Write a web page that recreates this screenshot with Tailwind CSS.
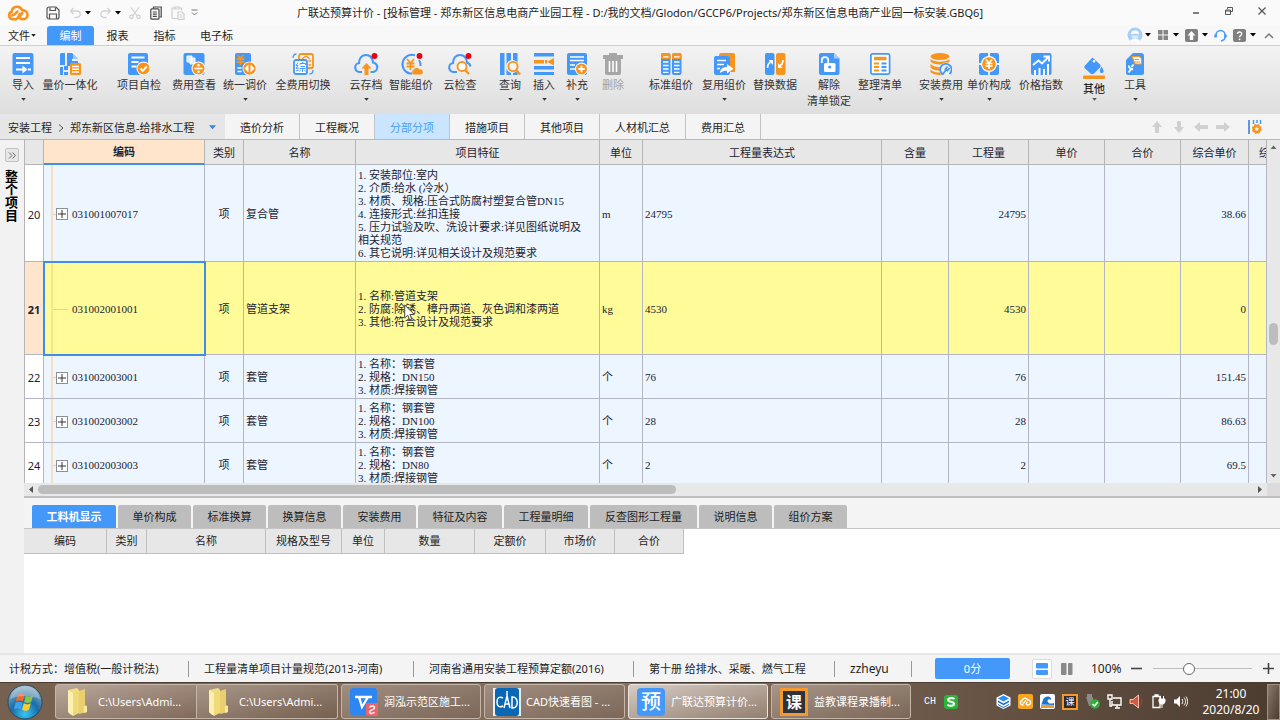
<!DOCTYPE html>
<html lang="zh-CN">
<head>
<meta charset="utf-8">
<meta name="viewport" content="width=device-width, initial-scale=1">
<title>广联达预算计价</title>
<script src="https://cdn.jsdelivr.net/npm/@tailwindcss/browser@4"></script>
</head>
<body class="flex h-screen flex-col overflow-hidden bg-[#f4f4f4] font-['Noto_Sans','Noto_Sans_CJK_SC',sans-serif] text-[11px] leading-4 text-[#1e1e1e]">

<!-- shared glyphs -->
<svg class="hidden" aria-hidden="true">
  <symbol id="caret" viewBox="0 0 6 4"><path d="M0 0h6L3 3.6z" fill="currentColor"/></symbol>
  <symbol id="folder" viewBox="0 0 24 30">
    <path d="M3 3l9-2 2 2v22l-8 3-3-3z" fill="#f3dd83"/><path d="M3 3l5 3v23l-5-4z" fill="#fbf0b4"/>
    <path d="M14 4l6-2v16l2 1v6l-8 2z" fill="#ead06c"/><path d="M8 6l6-3v23l-6 3z" fill="#f0d978"/><path d="M19 19h3v6l-3 1z" fill="#f7e9a0"/>
  </symbol>
</svg>

<!-- title bar -->
<header class="flex h-[25px] shrink-0 items-center bg-[#fafafa]">
  <div class="flex w-[208px] items-center pl-[7px]">
    <svg class="h-4 w-[22px]" viewBox="0 0 22 16" fill="none" stroke="#f7941d" stroke-width="2.6" stroke-linecap="round"><path d="M8.500 14.300H5.500A3.900 3.900 0 0 1 4.700 6.800C5 3.500 7.300 1.700 10 1.700c2.500 0 4.300 1.300 5 3.400 3.300 0 5.500 1.900 5.500 4.600 0 2.700-2 4.500-4.700 4.500-3.300 0-3.400-2.500-2-4.200l1.600-1.800"/><path d="M5 10.500c2.500-.3 3.500-2.500 5.500-3.800"/><path d="M8.500 14.300c3 0 3-3 4.500-5.500"/></svg>
    <button type="button" aria-label="保存" class="ml-[17px]"><svg class="size-[14px]" viewBox="0 0 14 14" fill="none" stroke="#555" stroke-width="1.200"><path d="M1 3a2 2 0 0 1 2-2h7l3 3v7a2 2 0 0 1-2 2H3a2 2 0 0 1-2-2z"/><path d="M4 1.500v3h5.500v-3M3.500 13V8h7v5"/></svg></button>
    <button type="button" aria-label="撤销" class="ml-[9px]"><svg class="size-3" viewBox="0 0 12 12" fill="none" stroke="#d2d2d2" stroke-width="1.300"><path d="M4.500 1L1.500 4l3 3M1.500 4H8a3 3 0 0 1 0 6.500H5.500"/></svg></button>
    <svg class="ml-[4px] h-1 w-[6px] text-black"><use href="#caret"/></svg>
    <button type="button" aria-label="恢复" class="ml-[9px]"><svg class="size-3" viewBox="0 0 12 12" fill="none" stroke="#d2d2d2" stroke-width="1.300"><path d="M7.500 1l3 3-3 3M10.500 4H4a3 3 0 0 0 0 6.500h2.500"/></svg></button>
    <svg class="ml-[3px] h-1 w-[6px] text-black"><use href="#caret"/></svg>
    <button type="button" aria-label="剪切" class="ml-[8px]"><svg class="size-3" viewBox="0 0 12 12" fill="none" stroke="#cfcfcf" stroke-width="1.200"><path d="M2 .5l6 8M10 .5l-6 8"/><circle cx="2.500" cy="9.800" r="1.700"/><circle cx="9.500" cy="9.800" r="1.700"/></svg></button>
    <button type="button" aria-label="复制" class="ml-[9px]"><svg class="h-[14px] w-3" viewBox="0 0 12 14" fill="none" stroke="#484848" stroke-width="1.200"><path d="M3.500 2.500V1h7.700v10H9.500"/><rect x=".8" y="2.800" width="8.200" height="10.400" rx="1"/><path d="M2.800 6h4M2.800 8.200h4M2.800 10.400h4"/></svg></button>
    <button type="button" aria-label="粘贴" class="ml-[9px]"><svg class="size-[14px]" viewBox="0 0 14 14" fill="none" stroke="#cfcfcf" stroke-width="1.200"><path d="M6 12.500H1V2h2.500M8 2h2.500v2.500M3.500 1h4.500v2H3.500z"/><path d="M7 6h4l2 2v5.300H7zM8.500 9h3M8.500 11h3"/></svg></button>
    <svg class="ml-[6px] size-[7px]" viewBox="0 0 7 7" fill="none" stroke="#777"><path d="M.5 1h6M1 3.500l2.500 2.500L6 3.500"/></svg>
  </div>
  <h1 class="flex-1 whitespace-nowrap text-center">广联达预算计价 - [投标管理 - 郑东新区信息电商产业园工程 - D:/我的文档/Glodon/GCCP6/Projects/郑东新区信息电商产业园一标安装.GBQ6]</h1>
  <div class="flex w-[208px] items-center justify-end gap-[23px] pr-[13px] pb-1">
    <button type="button" aria-label="最小化"><svg class="size-[10px]" viewBox="0 0 10 10"><path d="M2 7h6" stroke="#555" stroke-width="1.500"/></svg></button>
    <button type="button" aria-label="还原"><svg class="size-[10px]" viewBox="0 0 10 10" fill="none" stroke="#555"><path d="M3.500 3V1.500h5v4H7M1.500 4h5v4.500h-5zM1.500 5h5"/></svg></button>
    <button type="button" aria-label="关闭"><svg class="size-[10px]" viewBox="0 0 10 10"><path d="M1.500 1.500l7 7M8.500 1.500l-7 7" stroke="#555" stroke-width="1.200"/></svg></button>
  </div>
</header>

<!-- menu -->
<nav class="flex h-[21px] shrink-0 items-end border-b border-[#cfcfcf] bg-[#f8f8f8]">
  <button type="button" class="flex h-[19px] w-[47px] items-center pl-2">文件<svg class="ml-px h-[3px] w-[5px]"><use href="#caret"/></svg></button>
  <button type="button" class="h-[19px] w-[47px] rounded-t-[3px] bg-[#4398fa] text-white">编制</button>
  <button type="button" class="h-[19px] w-[47px]">报表</button>
  <button type="button" class="h-[19px] w-[47px]">指标</button>
  <button type="button" class="h-[19px] w-[57px]">电子标</button>
  <div class="ml-auto flex h-5 items-center pr-[6px] text-black">
    <button type="button" aria-label="账户" class="flex items-center"><svg class="size-4" viewBox="0 0 16 16"><circle cx="8" cy="8" r="7.500" fill="#a9cff6"/><path d="M4 7.500a4 4 0 0 1 8 0l-2-.8H6z" fill="#fff"/><path d="M4.500 8.500a3.500 3.500 0 0 0 7 0z" fill="#d8ebfd"/><path d="M3 14c1-3 9-3 10 0-3 2-7 2-10 0z" fill="#fff"/></svg><svg class="ml-[2px] h-1 w-[6px]"><use href="#caret"/></svg></button>
    <button type="button" aria-label="布局" class="ml-[6px] flex items-center"><svg class="size-[12px]" viewBox="0 0 12 12" fill="#858585"><path d="M1 1h4.500v4.500H1zM6.500 1H11v4.500H6.500zM1 6.500h4.500V11H1zM6.500 6.500H11V11H6.500z"/></svg><svg class="ml-[4px] h-1 w-[6px]"><use href="#caret"/></svg></button>
    <button type="button" aria-label="上传" class="ml-[6px] flex items-center"><svg class="size-[13px]" viewBox="0 0 13 13"><rect width="13" height="13" rx="2" fill="#808080"/><path d="M6.500 2l4 4.500h-2.300V11H4.800V6.500H2.500z" fill="#fff"/></svg><svg class="ml-[4px] h-1 w-[6px]"><use href="#caret"/></svg></button>
    <button type="button" aria-label="客服" class="ml-[6px]"><svg class="size-[13px]" viewBox="0 0 13 13" fill="none" stroke="#4398fa" stroke-width="1.500"><path d="M2 8V6a4.500 4.500 0 0 1 9 0v2c0 2-1.500 3.500-4 4"/><path d="M1.500 5.500v3M11.500 5.500v3" stroke-width="2.400"/></svg></button>
    <button type="button" aria-label="帮助" class="ml-[6px] flex items-center"><svg class="size-[13px]" viewBox="0 0 13 13"><rect width="13" height="13" rx="2" fill="#808080"/><path d="M4.500 5c0-2.800 4.300-2.600 4.200-.2C8.700 6.500 6.600 6.500 6.600 8.200" fill="none" stroke="#fff" stroke-width="1.400"/><circle cx="6.600" cy="10.300" r=".9" fill="#fff"/></svg><svg class="ml-[4px] h-1 w-[6px]"><use href="#caret"/></svg></button>
    <button type="button" aria-label="收起" class="ml-[8px]"><svg class="h-[7px] w-[10px]" viewBox="0 0 10 7" fill="none" stroke="#777" stroke-width="1.500"><path d="M1 6l4-4 4 4"/></svg></button>
  </div>
</nav>

<!-- ribbon -->
<div class="flex h-[68px] shrink-0 items-start bg-linear-to-b from-[#f3f3f3] to-[#dedede] pt-[7px] pl-[10px] whitespace-nowrap text-[#333]">
  <button type="button" class="flex w-[26px] flex-col items-center"><svg class="size-[22px]" viewBox="0 0 22 22"><rect x=".5" width="21" height="22" rx="2" fill="#4398fa"/><path d="M4 5h14M4 10h14M4 16.500h7M16 16.500h3" stroke="#fff" stroke-width="1.800"/><path d="M10.500 12.500l5 4-5 4z" fill="#fff"/></svg><span class="mt-[2px]">导入</span><svg class="mt-[5px] h-[3px] w-[5px]"><use href="#caret"/></svg></button>
  <button type="button" class="ml-[5px] flex w-[58px] flex-col items-center"><svg class="size-[22px]" viewBox="0 0 22 22"><path d="M2 0h4v12H1V1zM8 0h5v8h6v3h-7v2H8zM13 0l6 6h-6z" fill="#4398fa"/><path d="M14 1v5h5z" fill="#9dcbff"/><rect x="5" y="13" width="4" height="4" fill="#4398fa"/><path d="M1 14h3v8H1zM5 19h4v3H5z" fill="#4398fa"/><rect x="11" y="10" width="11" height="12" rx="1.500" fill="#f7941d"/><path d="M13 13.500h7M13 16.200h7M13 19h7" stroke="#fff" stroke-width="1.400"/></svg><span class="mt-[2px]">量价一体化</span><svg class="mt-[5px] h-[3px] w-[5px]"><use href="#caret"/></svg></button>
  <button type="button" class="ml-[16px] flex w-[48px] flex-col items-center"><svg class="size-[22px]" viewBox="0 0 22 22"><rect width="20" height="22" rx="2" fill="#4398fa"/><path d="M3.500 4.500h13M3.500 9h7M3.500 13.500h5" stroke="#fff" stroke-width="1.800"/><circle cx="15.500" cy="15.500" r="7" fill="#fff"/><circle cx="15.500" cy="15.500" r="6" fill="#f7941d"/><path d="M12.500 15.500l2.300 2.300 4-4.300" fill="none" stroke="#fff" stroke-width="1.900"/></svg><span class="mt-[2px]">项目自检</span></button>
  <button type="button" class="ml-[7px] flex w-[48px] flex-col items-center"><svg class="size-[22px]" viewBox="0 0 22 22"><rect x=".5" width="21" height="22" rx="2" fill="#4398fa"/><path d="M4 3h5v6H4zM7 5h5v6H7z" fill="#d9ebff" stroke="#fff"/><circle cx="15.500" cy="15.500" r="7" fill="#fff"/><circle cx="15.500" cy="15.500" r="6" fill="#f7941d"/><path d="M11.500 15.500h8" stroke="#fff" stroke-width="1.700"/><circle cx="15.500" cy="12.300" r="1.200" fill="#fff"/><circle cx="15.500" cy="18.700" r="1.200" fill="#fff"/></svg><span class="mt-[2px]">费用查看</span></button>
  <button type="button" class="ml-[3px] flex w-[48px] flex-col items-center"><svg class="size-[22px]" viewBox="0 0 22 22"><rect x="1" width="16" height="22" rx="2" fill="#4398fa"/><path d="M3.500 2l3 3.500 3-3.500M2.500 6h8M2.500 9h8M6.500 5v7" fill="none" stroke="#f7941d" stroke-width="1.900"/><path d="M3.500 15h4M3.500 18.500h4" stroke="#fff" stroke-width="1.500"/><circle cx="15.500" cy="15.500" r="7" fill="#fff"/><circle cx="15.500" cy="15.500" r="6.200" fill="#f7941d"/><path d="M14.500 11.500v8l-4-4zM16.500 11.500v8l4-4z" fill="#fff"/></svg><span class="mt-[2px]">统一调价</span><svg class="mt-[5px] h-[3px] w-[5px]"><use href="#caret"/></svg></button>
  <button type="button" class="ml-[5px] flex w-[58px] flex-col items-center"><svg class="size-[22px]" viewBox="0 0 22 22" fill="none"><rect x="7" y="1" width="14" height="14" rx="2" stroke="#f7941d" stroke-width="1.800"/><path d="M10 6l4-3 4 3M16.500 8h2.500M16.500 12h2.500" stroke="#f7941d" stroke-width="1.400"/><rect x="2" y="7" width="13" height="14" rx="2" fill="#fff" stroke="#4398fa" stroke-width="1.800"/><path d="M6 9.500l-2 3h2l-2 3 3-.5M4 18l3-1M10.500 9v1.500M8 12v-1.500h5.500V12M8.500 13.500h4.500M7.500 15.500h6M10.500 15.500V19M8.500 17l-1 1.500M12.500 17l1 1.500" stroke="#4398fa"/><path d="M1 5c0-2.500 1-4 3.500-4M21 17c0 2.500-1 4-3.500 4" stroke="#4398fa" stroke-width="1.300"/></svg><span class="mt-[2px]">全费用切换</span></button>
  <button type="button" class="ml-[16px] flex w-[36px] flex-col items-center"><svg class="size-[22px] overflow-visible" viewBox="0 0 22 22"><path d="M7 19H5.500A4.500 4.500 0 0 1 4 10C4 5 7 2 11 2s6.500 3 7 7.500A4.700 4.700 0 0 1 17 19h-1.500" fill="none" stroke="#4398fa" stroke-width="2.100"/><path d="M11.500 10l5 5.500h-3V22h-4v-6.500h-3z" fill="#f7941d"/><circle cx="19.500" cy="3" r="2.900" fill="#e60012"/></svg><span class="mt-[2px]">云存档</span><svg class="mt-[5px] h-[3px] w-[5px]"><use href="#caret"/></svg></button>
  <button type="button" class="ml-[3px] flex w-[48px] flex-col items-center"><svg class="size-[22px] overflow-visible" viewBox="0 0 22 22"><path d="M15 2.200A9.500 9.500 0 1 0 10 20.500h2M19 7a9 9 0 0 1 1.500 6" fill="none" stroke="#4398fa" stroke-width="2"/><path d="M7 6l3.500 4L14 6M6.500 10.500h8M6.500 13.500h8M10.500 10v7" fill="none" stroke="#f7941d" stroke-width="1.800"/><path d="M13 21.500a3 3 0 0 1 1-5 3 3 0 0 1 5.500 0 2.600 2.600 0 0 1 1.500 5z" fill="#f7941d"/><circle cx="19.500" cy="3" r="2.900" fill="#e60012"/></svg><span class="mt-[2px]">智能组价</span></button>
  <button type="button" class="ml-[7px] flex w-[36px] flex-col items-center"><svg class="size-[22px] overflow-visible" viewBox="0 0 22 22"><path d="M8 19H5.500A4.500 4.500 0 0 1 4 10C4 5 7 2 11 2s6.500 3 7 7.500a5 5 0 0 1 3.500 4" fill="none" stroke="#4398fa" stroke-width="2.100"/><circle cx="13" cy="13.500" r="4.500" fill="#fff" stroke="#f7941d" stroke-width="1.900"/><path d="M16 17l4 4" stroke="#f7941d" stroke-width="2.400"/><circle cx="19.500" cy="3" r="2.900" fill="#e60012"/></svg><span class="mt-[2px]">云检查</span></button>
  <button type="button" class="ml-[19px] flex w-[26px] flex-col items-center"><svg class="size-[22px]" viewBox="0 0 22 22"><path d="M1 0h4.500v22H1zM7.500 0H12v22H7.500zM14 0h4.500v22H14z" fill="#4398fa"/><circle cx="13.500" cy="13.500" r="6.500" fill="#f1f1f1"/><circle cx="14" cy="13.500" r="4.600" fill="#f4f4f4" stroke="#f7941d" stroke-width="1.900"/><path d="M17 17l4 4.500" stroke="#f7941d" stroke-width="2.400"/></svg><span class="mt-[2px]">查询</span><svg class="mt-[5px] h-[3px] w-[5px]"><use href="#caret"/></svg></button>
  <button type="button" class="ml-[8px] flex w-[26px] flex-col items-center"><svg class="size-[22px]" viewBox="0 0 22 22"><path d="M1 0h20v3.500H1zM1 13h20v3.500H1zM1 19h20v3H1z" fill="#4398fa"/><path d="M1 7h10v3.500H1zM21 5v7.500l-7-3.700zM12 7h2v3.500h-2z" fill="#f7941d"/></svg><span class="mt-[2px]">插入</span><svg class="mt-[5px] h-[3px] w-[5px]"><use href="#caret"/></svg></button>
  <button type="button" class="ml-[7px] flex w-[26px] flex-col items-center"><svg class="size-[22px]" viewBox="0 0 22 22"><rect x="1" width="20" height="22" rx="2" fill="#4398fa"/><path d="M4 4h14M4 7.500h14M4 12h5M4 16h5" stroke="#fff" stroke-width="1.400"/><circle cx="15.500" cy="16" r="6.500" fill="#fff"/><circle cx="15.500" cy="16" r="5.500" fill="#f7941d"/><path d="M12.300 16h6.400M15.500 12.800v6.400" stroke="#fff" stroke-width="1.800"/></svg><span class="mt-[2px]">补充</span><svg class="mt-[5px] h-[3px] w-[5px]"><use href="#caret"/></svg></button>
  <button type="button" disabled class="ml-[10px] flex w-[26px] flex-col items-center text-[#a2a2a2]"><svg class="size-[22px]" viewBox="0 0 22 22" fill="#a6a6a6"><path d="M7 0h8v2h6v4H1V2h6z"/><path d="M3 6h16v14a2 2 0 0 1-2 2H5a2 2 0 0 1-2-2z"/><path d="M7.500 8v11M11 8v11M14.500 8v11" stroke="#fff" stroke-width="1.600"/></svg><span class="mt-[2px]">删除</span></button>
  <button type="button" class="ml-[21px] flex w-[48px] flex-col items-center"><svg class="size-[22px]" viewBox="0 0 22 22"><rect x="1" width="9.500" height="22" rx="2" fill="#4398fa"/><rect x="12" width="9.500" height="22" rx="2" fill="#4398fa"/><path d="M1 6V2a2 2 0 0 1 2-2h5.500a2 2 0 0 1 2 2v4zM12 6V2a2 2 0 0 1 2-2h5.500a2 2 0 0 1 2 2v4z" fill="#f7941d"/><path d="M3 3.800h5.500M14 3.800h5.500M3 9h5.500M14 9h5.500M3 12.500h5.500M14 12.500h5.500M3 16h5.500M14 16h5.500M3 19.300h5.500M14 19.300h5.500" stroke="#fff" stroke-width="1.300"/></svg><span class="mt-[2px]">标准组价</span></button>
  <button type="button" class="ml-[5px] flex w-[48px] flex-col items-center"><svg class="size-[22px]" viewBox="0 0 22 22"><path d="M6 2a2 2 0 0 1 2-2h12a2 2 0 0 1 2 2v17h-6V3H6z" fill="#f7941d"/><rect x="1" y="3" width="16" height="19" rx="2" fill="#4398fa"/><path d="M4 7.500h9M4 11.500h7M4 15.500h3" stroke="#fff" stroke-width="1.700"/><path d="M7 20c0-4 3-6 7-6v-3l6.500 4.800L14 20.500v-2.800c-3 0-5 .5-7 2.300z" fill="#fff"/></svg><span class="mt-[2px]">复用组价</span><svg class="mt-[5px] h-[3px] w-[5px]"><use href="#caret"/></svg></button>
  <button type="button" class="ml-[3px] flex w-[48px] flex-col items-center"><svg class="size-[22px]" viewBox="0 0 22 22"><rect x="1" width="9.500" height="22" rx="2" fill="#4398fa"/><rect x="12" width="9.500" height="22" rx="2" fill="#f7941d"/><path d="M3.500 15c0-3 .5-4.500 3-6M19 7c0 3-.5 4.500-3 6" fill="none" stroke="#fff" stroke-width="1.600"/><path d="M4.500 7H9v5zM18.500 15H14v-5z" fill="#fff"/></svg><span class="mt-[2px]">替换数据</span></button>
  <button type="button" class="ml-[6px] flex w-[48px] flex-col items-center"><svg class="size-[22px]" viewBox="0 0 22 22"><path d="M3 0h13l5.500 5.500V20a2 2 0 0 1-2 2H3a2 2 0 0 1-2-2V2a2 2 0 0 1 2-2z" fill="#4398fa"/><path d="M16 0v5.500h5.500z" fill="#a5d0ff"/><rect x="6" y="10" width="11.500" height="9" rx="1.500" fill="#fff"/><path d="M3.800 10V7.300a3.200 3.200 0 0 1 6.400 0V10" fill="none" stroke="#fff" stroke-width="1.800"/><circle cx="11.700" cy="14" r="1.600" fill="#4398fa"/></svg><span class="mt-[2px] text-center">解除<br>清单锁定</span></button>
  <button type="button" class="ml-[3px] flex w-[48px] flex-col items-center"><svg class="size-[22px]" viewBox="0 0 22 22"><rect x="1.900" y=".9" width="18.700" height="20.200" rx="1.500" fill="#fff" stroke="#4398fa" stroke-width="1.700"/><path d="M5 5.500h12.500" stroke="#f7941d" stroke-width="3.500"/><path d="M5 10.500h5M5 14h5M5 17.500h5" stroke="#f7941d" stroke-width="1.900"/><path d="M12.500 10.500h5M12.500 14h5M12.500 17.500h5" stroke="#4398fa" stroke-width="1.900"/></svg><span class="mt-[2px]">整理清单</span><svg class="mt-[5px] h-[3px] w-[5px]"><use href="#caret"/></svg></button>
  <button type="button" class="ml-[13px] flex w-[48px] flex-col items-center"><svg class="size-[22px]" viewBox="0 0 22 22"><ellipse cx="10" cy="3.500" rx="9.500" ry="3.500" fill="#f7941d"/><path d="M.5 6c3 3.500 16 3.500 19 0v2.500c-3 4-16 4-19 0zM.5 11c3 3 8 3.500 11 3l-1 3.500c-4 0-8-.5-10-3zM.5 16.500c2 2.500 6 3 9.500 3l1 2.500c-5 0-9-1-10.500-3z" fill="#f7941d"/><circle cx="16" cy="16" r="6.500" fill="#f0f0f0"/><path d="M13 21.500a5.700 5.700 0 1 1 6.500-.5" fill="none" stroke="#4398fa" stroke-width="1.800"/><path d="M17.500 13.500l-2 2.500 2 1.500 2-2.500M16 17l-4 5" stroke="#4398fa" stroke-width="1.900" fill="none"/></svg><span class="mt-[2px]">安装费用</span><svg class="mt-[5px] h-[3px] w-[5px]"><use href="#caret"/></svg></button>
  <button type="button" class="flex w-[48px] flex-col items-center"><svg class="size-[22px]" viewBox="0 0 22 22"><path d="M1 2a2 2 0 0 1 2-2h7v10H1zM12 0h7a2 2 0 0 1 2 2v8h-9zM1 12h9v10H3a2 2 0 0 1-2-2zM12 12h9v8a2 2 0 0 1-2 2h-7z" fill="#4398fa"/><circle cx="11" cy="11" r="8" fill="#fff"/><circle cx="11" cy="11" r="6.800" fill="#f7941d"/><path d="M8 6.500l3 3.500 3-3.500M7.500 10.500h7M7.500 13h7M11 10v6" fill="none" stroke="#fff" stroke-width="1.500"/></svg><span class="mt-[2px]">单价构成</span><svg class="mt-[5px] h-[3px] w-[5px]"><use href="#caret"/></svg></button>
  <button type="button" class="ml-[4px] flex w-[48px] flex-col items-center"><svg class="size-[22px]" viewBox="0 0 22 22"><rect x="1" width="20.500" height="22" rx="2" fill="#4398fa"/><path d="M5 22v-5M9.500 22v-7M14 22v-6M18 22V11" stroke="#fff" stroke-width="2"/><path d="M3 12l5.500-4.500 3.500 3L18.500 4M13.500 3.500h5.500v5" fill="none" stroke="#fff" stroke-width="1.800"/></svg><span class="mt-[2px]">价格指数</span></button>
  <button type="button" class="ml-[16px] flex w-[26px] flex-col items-center pt-1 text-black"><svg class="size-[22px]" viewBox="0 0 22 22"><rect y="18.500" width="22" height="3.500" rx="1" fill="#f7941d"/><path d="M9.500.5l8 7.500v2l-6.500 6.500c-1 1-2.500 1-3.500 0L2 11.500c-1-1-1-2 0-3z" fill="#4398fa"/><circle cx="11" cy="4.200" r="1.300" fill="#fff"/><path d="M18.500 9.500c3 4.500 2.500 6.500.3 6.500-2.500 0-2.500-2.500-.3-6.500z" fill="#4398fa"/></svg><span class="mt-[2px]">其他</span><svg class="mt-px h-[3px] w-[5px] text-[#555]"><use href="#caret"/></svg></button>
  <button type="button" class="ml-[15px] flex w-[26px] flex-col items-center"><svg class="size-[22px]" viewBox="0 0 22 22"><path d="M9 0h8a3 3 0 0 1 3 3v17a2 2 0 0 1-2 2H4a2 2 0 0 1-2-2V7z" fill="#4398fa"/><path d="M8 3.500h7.500l2 2V11H11z" fill="#fff" stroke="#f7941d" stroke-width="1.200"/><path d="M10.500 6.500h4.500M11 9h5" stroke="#f7941d"/><path d="M5 12.500a3 3 0 0 0 4 3.500M9.500 11.500l-2 2.500M8 15l-3.500 4.500" stroke="#fff" stroke-width="1.900" fill="none"/></svg><span class="mt-[2px]">工具</span><svg class="mt-[5px] h-[3px] w-[5px]"><use href="#caret"/></svg></button>
</div>

<!-- project tabs -->
<div class="flex h-[26px] shrink-0 items-stretch border-b border-[#b9b9b9] bg-[#f4f4f4] whitespace-nowrap [&>button]:pt-[2px]">
  <div class="flex w-[225px] items-center bg-[#e6e6e6] pt-[2px] pl-2">
    <a href="#">安装工程</a>
    <svg class="mx-[6px] h-2 w-[6px]" viewBox="0 0 6 8" fill="none" stroke="#555"><path d="M1 .5L5 4 1 7.500"/></svg>
    <button type="button" class="flex flex-1 items-center justify-between pr-[9px]">郑东新区信息-给排水工程<svg class="h-[5px] w-[7px] text-[#3a86d8]"><use href="#caret"/></svg></button>
  </div>
  <button type="button" class="w-[75px] border-r border-[#c2c2c2]">造价分析</button>
  <button type="button" class="w-[75px] border-r border-[#c2c2c2]">工程概况</button>
  <button type="button" class="w-[75px] border-r border-[#c2c2c2] bg-[#c9e5ff] text-[#4a9ef5]">分部分项</button>
  <button type="button" class="w-[75px] border-r border-[#c2c2c2]">措施项目</button>
  <button type="button" class="w-[75px] border-r border-[#c2c2c2]">其他项目</button>
  <button type="button" class="w-[86px] border-r border-[#c2c2c2]">人材机汇总</button>
  <button type="button" class="w-[75px] border-r border-[#c2c2c2]">费用汇总</button>
  <div class="ml-auto flex items-center gap-2 pr-[18px] text-[#d0d0d0]">
    <button type="button" aria-label="上移"><svg class="size-[14px]" viewBox="0 0 14 14" fill="currentColor"><path d="M7 1l5 6H9v6H5V7H2z"/></svg></button>
    <button type="button" aria-label="下移"><svg class="size-[14px]" viewBox="0 0 14 14" fill="currentColor"><path d="M7 13l5-6H9V1H5v6H2z"/></svg></button>
    <button type="button" aria-label="左移"><svg class="size-[14px]" viewBox="0 0 14 14" fill="currentColor"><path d="M0 7l6-5v3h8v4H6v3z"/></svg></button>
    <button type="button" aria-label="右移"><svg class="size-[14px]" viewBox="0 0 14 14" fill="currentColor"><path d="M14 7L8 2v3H0v4h8v3z"/></svg></button>
    <button type="button" aria-label="列设置" class="ml-[10px]"><svg class="size-[14px]" viewBox="0 0 14 14"><path d="M1 0v14" stroke="#3d7fd0" stroke-width="1.600"/><path d="M5.500 0v4M9 0v3M12.500 0v4" stroke="#4398fa" stroke-width="1.500"/><circle cx="8.800" cy="9" r="3" fill="none" stroke="#f7941d" stroke-width="2.400"/><circle cx="8.800" cy="9" r="4.300" fill="none" stroke="#f7941d" stroke-width="1.300" stroke-dasharray="2 1.400"/></svg></button>
  </div>
</div>

<main class="flex min-h-0 flex-1">
  <!-- collapsed project tree -->
  <aside class="flex w-6 shrink-0 flex-col items-start bg-[#f2f2f2] pt-2 pl-1">
    <button type="button" aria-label="展开" class="ml-px flex size-[14px] items-center justify-center rounded-[2px] border border-[#c4c4c4] bg-[#e6e6e6]"><svg class="h-[7px] w-2" viewBox="0 0 8 7" fill="none" stroke="#666"><path d="M1 .5l3 3-3 3M4.500.5l3 3-3 3"/></svg></button>
    <div class="mt-2 text-[13px] leading-[13px] font-bold text-black [writing-mode:vertical-rl]">整个项目</div>
  </aside>

  <div class="flex min-w-0 flex-1 flex-col">
    <!-- bill grid -->
    <div class="flex min-h-0 flex-1">
      <div class="min-w-0 flex-1 overflow-hidden border-l border-[#b5b5b5] bg-white">
        <table class="w-full table-fixed border-separate border-spacing-0 whitespace-nowrap font-['Liberation_Serif','Noto_Sans_CJK_SC',serif] leading-[13px] text-[#1b2330] [&_td]:border-r [&_td]:border-b [&_td]:border-[#b3b6c4] [&_td]:px-[2px] [&_td]:pt-[2px] [&_td]:pb-0 [&_th]:overflow-hidden [&_th]:border-r [&_th]:border-b [&_th]:border-[#b5b5b5] [&_th]:p-0">
          <colgroup><col class="w-[19px]"><col class="w-[161px]"><col class="w-[39px]"><col class="w-[112px]"><col class="w-[244px]"><col class="w-[43px]"><col class="w-[239px]"><col class="w-[67px]"><col class="w-[80px]"><col class="w-[76px]"><col class="w-[76px]"><col class="w-[68px]"><col></colgroup>
          <thead class="bg-[#e7e7e7] font-['Noto_Sans','Noto_Sans_CJK_SC',sans-serif]">
            <tr class="h-[25px] [&>th]:font-normal">
              <th></th>
              <th class="border-b-2! border-b-[#3f8fe6]! bg-[#ffe5cb] font-bold!">编码</th>
              <th>类别</th><th>名称</th><th>项目特征</th><th>单位</th><th>工程量表达式</th><th>含量</th><th>工程量</th><th>单价</th><th>合价</th><th>综合单价</th>
              <th class="pl-[10px]! text-left">综</th>
            </tr>
          </thead>
          <tbody class="bg-[#edf5ff]">
            <tr class="h-[97px]">
              <td class="bg-white text-center font-['Noto_Sans']">20</td>
              <td class="bg-[linear-gradient(#f8dfc0,#f8dfc0)] bg-[length:2px_100%] bg-[position:7px_0] bg-no-repeat"><div class="flex items-center pl-[7px]"><span class="h-px w-[3px] bg-[#f0cfa5]"></span><button type="button" aria-label="展开" class="flex size-3 items-center justify-center border border-[#8c8f98] bg-white"><svg class="size-2" viewBox="0 0 8 8"><path d="M0 4h8M4 0v8" stroke="#333"/></svg></button><span class="ml-1">031001007017</span></div></td>
              <td class="text-center">项</td><td>复合管</td>
              <td>1. 安装部位:室内<br>2. 介质:给水 (冷水）<br>3. 材质、规格:压合式防腐衬塑复合管DN15<br>4. 连接形式:丝扣连接<br>5. 压力试验及吹、洗设计要求:详见图纸说明及<br>相关规范<br>6. 其它说明:详见相关设计及规范要求</td>
              <td>m</td><td>24795</td><td></td><td class="text-right">24795</td><td></td><td></td><td class="text-right">38.66</td><td></td>
            </tr>
            <tr class="h-[93px] bg-[#fffb98]">
              <td class="bg-[#ffe5cb] text-center font-['Noto_Sans'] font-bold">21</td>
              <td class="bg-[linear-gradient(#fbe38c,#fbe38c)] bg-[length:2px_100%] bg-[position:7px_0] bg-no-repeat outline-2 -outline-offset-1 outline-[#3f8fe6]"><div class="flex items-center pl-[7px]"><span class="h-px w-[15px] bg-[#e8d58a]"></span><span class="ml-1">031002001001</span></div></td>
              <td class="text-center">项</td><td>管道支架</td>
              <td class="relative">1. 名称:管道支架<br>2. 防腐:除锈、樟丹两道、灰色调和漆两道<br>3. 其他:符合设计及规范要求
                <svg class="absolute top-[42px] left-[48px] h-[17px] w-3" viewBox="0 0 12 17"><path d="M.7 1v13l3-2.800 2 4.800 2.200-1-2-4.500h4.400z" fill="#fff" stroke="#444"/></svg></td>
              <td>kg</td><td>4530</td><td></td><td class="text-right">4530</td><td></td><td></td><td class="text-right">0</td><td></td>
            </tr>
            <tr class="h-[44px]">
              <td class="bg-white text-center font-['Noto_Sans']">22</td>
              <td class="bg-[linear-gradient(#f8dfc0,#f8dfc0)] bg-[length:2px_100%] bg-[position:7px_0] bg-no-repeat"><div class="flex items-center pl-[7px]"><span class="h-px w-[3px] bg-[#f0cfa5]"></span><button type="button" aria-label="展开" class="flex size-3 items-center justify-center border border-[#8c8f98] bg-white"><svg class="size-2" viewBox="0 0 8 8"><path d="M0 4h8M4 0v8" stroke="#333"/></svg></button><span class="ml-1">031002003001</span></div></td>
              <td class="text-center">项</td><td>套管</td><td>1. 名称：钢套管<br>2. 规格：DN150<br>3. 材质:焊接钢管</td>
              <td>个</td><td>76</td><td></td><td class="text-right">76</td><td></td><td></td><td class="text-right">151.45</td><td></td>
            </tr>
            <tr class="h-[44px]">
              <td class="bg-white text-center font-['Noto_Sans']">23</td>
              <td class="bg-[linear-gradient(#f8dfc0,#f8dfc0)] bg-[length:2px_100%] bg-[position:7px_0] bg-no-repeat"><div class="flex items-center pl-[7px]"><span class="h-px w-[3px] bg-[#f0cfa5]"></span><button type="button" aria-label="展开" class="flex size-3 items-center justify-center border border-[#8c8f98] bg-white"><svg class="size-2" viewBox="0 0 8 8"><path d="M0 4h8M4 0v8" stroke="#333"/></svg></button><span class="ml-1">031002003002</span></div></td>
              <td class="text-center">项</td><td>套管</td><td>1. 名称：钢套管<br>2. 规格：DN100<br>3. 材质:焊接钢管</td>
              <td>个</td><td>28</td><td></td><td class="text-right">28</td><td></td><td></td><td class="text-right">86.63</td><td></td>
            </tr>
            <tr class="h-[44px]">
              <td class="bg-white text-center font-['Noto_Sans']">24</td>
              <td class="bg-[linear-gradient(#f8dfc0,#f8dfc0)] bg-[length:2px_100%] bg-[position:7px_0] bg-no-repeat"><div class="flex items-center pl-[7px]"><span class="h-px w-[3px] bg-[#f0cfa5]"></span><button type="button" aria-label="展开" class="flex size-3 items-center justify-center border border-[#8c8f98] bg-white"><svg class="size-2" viewBox="0 0 8 8"><path d="M0 4h8M4 0v8" stroke="#333"/></svg></button><span class="ml-1">031002003003</span></div></td>
              <td class="text-center">项</td><td>套管</td><td>1. 名称：钢套管<br>2. 规格：DN80<br>3. 材质:焊接钢管</td>
              <td>个</td><td>2</td><td></td><td class="text-right">2</td><td></td><td></td><td class="text-right">69.5</td><td></td>
            </tr>
          </tbody>
        </table>
      </div>
      <!-- vertical scrollbar -->
      <div class="flex w-[13px] shrink-0 flex-col items-center bg-[#e8e8e8] py-[5px] text-[#666]">
        <svg class="h-1 w-[7px] rotate-180"><use href="#caret"/></svg>
        <div class="flex-[174_1_0%]"></div>
        <div class="h-[22px] w-[9px] rounded-full bg-[#bdbdbd]"></div>
        <div class="flex-[129_1_0%]"></div>
        <svg class="h-1 w-[7px]"><use href="#caret"/></svg>
      </div>
    </div>
    <!-- horizontal scrollbar -->
    <div class="flex h-[13px] shrink-0 items-center bg-[#e8e8e8] text-[#555]">
      <svg class="mx-[5px] h-[7px] w-1" viewBox="0 0 4 7"><path d="M4 0v7L0 3.500z" fill="currentColor"/></svg>
      <div class="flex-1"><div class="h-[9px] w-[52.5%] rounded-full bg-[#bdbdbd]"></div></div>
      <svg class="mx-[5px] h-[7px] w-1" viewBox="0 0 4 7"><path d="M0 0v7l4-3.500z" fill="currentColor"/></svg>
      <div class="h-full w-[13px] bg-[#dcdcdc]"></div>
    </div>

    <!-- detail pane -->
    <section class="flex h-[157px] shrink-0 flex-col border-t-2 border-[#bdbdbd] bg-[#f4f4f4]">
      <div class="flex h-[31px] shrink-0 items-end gap-[2px] border-b border-[#c4c4c4] pl-2 whitespace-nowrap">
        <button type="button" class="h-[23px] w-[84px] rounded-t-[2px] bg-[#4398fa] font-bold text-white">工料机显示</button>
        <button type="button" class="h-[23px] w-[73px] rounded-t-[2px] bg-[#bdbdbd]">单价构成</button>
        <button type="button" class="h-[23px] w-[73px] rounded-t-[2px] bg-[#bdbdbd]">标准换算</button>
        <button type="button" class="h-[23px] w-[73px] rounded-t-[2px] bg-[#bdbdbd]">换算信息</button>
        <button type="button" class="h-[23px] w-[73px] rounded-t-[2px] bg-[#bdbdbd]">安装费用</button>
        <button type="button" class="h-[23px] w-[84px] rounded-t-[2px] bg-[#bdbdbd]">特征及内容</button>
        <button type="button" class="h-[23px] w-[84px] rounded-t-[2px] bg-[#bdbdbd]">工程量明细</button>
        <button type="button" class="h-[23px] w-[107px] rounded-t-[2px] bg-[#bdbdbd]">反查图形工程量</button>
        <button type="button" class="h-[23px] w-[73px] rounded-t-[2px] bg-[#bdbdbd]">说明信息</button>
        <button type="button" class="h-[23px] w-[73px] rounded-t-[2px] bg-[#bdbdbd]">组价方案</button>
      </div>
      <div class="flex-1 bg-white">
        <table class="w-[660px] table-fixed border-separate border-spacing-0 bg-[#e7e7e7] whitespace-nowrap">
          <thead><tr class="h-[25px] [&>th]:border-r [&>th]:border-b [&>th]:border-[#bfbfbf] [&>th]:p-0 [&>th]:font-normal">
            <th class="w-[83px]">编码</th><th class="w-[40px]">类别</th><th class="w-[119px]">名称</th><th class="w-[76px]">规格及型号</th><th class="w-[43px]">单位</th><th class="w-[90px]">数量</th><th class="w-[71px]">定额价</th><th class="w-[69px]">市场价</th><th class="w-[69px]">合价</th>
          </tr></thead>
        </table>
      </div>
    </section>
  </div>
</main>

<!-- status bar -->
<footer class="flex h-[29px] shrink-0 items-center border-t-2 border-[#e6e6e6] bg-[#f4f4f4] pl-[9px] whitespace-nowrap">
  <span class="w-[179px]">计税方式：增值税(一般计税法)</span>
  <span class="h-4 w-px bg-[#999]"></span>
  <span class="w-[224px] pl-[15px]">工程量清单项目计量规范(2013-河南)</span>
  <span class="h-4 w-px bg-[#999]"></span>
  <span class="w-[219px] pl-[15px]">河南省通用安装工程预算定额(2016)</span>
  <span class="h-4 w-px bg-[#999]"></span>
  <span class="w-[200px] pl-[15px]">第十册 给排水、采暖、燃气工程</span>
  <span class="h-4 w-px bg-[#999]"></span>
  <span class="w-[76px] pl-[15px] text-[12px]">zzheyu</span>
  <span class="h-4 w-px bg-[#999]"></span>
  <div class="ml-auto flex items-center pr-[6px]">
    <button type="button" class="h-[21px] w-[75px] rounded-[2px] bg-[#4398fa] text-white">0分</button>
    <button type="button" aria-label="上下布局" class="ml-[22px] flex size-5 items-center justify-center rounded-[2px] border border-[#dcdcdc] bg-white"><svg class="size-3" viewBox="0 0 12 12" fill="#4398fa"><rect width="12" height="5.500" rx="1"/><rect y="7" width="12" height="5" rx="1"/></svg></button>
    <button type="button" aria-label="左右布局" class="ml-[9px]"><svg class="size-3" viewBox="0 0 12 12" fill="#8a8a8a"><rect width="5.500" height="12" rx="1"/><rect x="7" width="4.500" height="12" rx="1"/></svg></button>
    <span class="ml-[18px] w-[40px] text-[12px]">100%</span>
    <button type="button" aria-label="缩小"><svg class="size-[11px]" viewBox="0 0 11 11"><path d="M0 5.500h11" stroke="#444" stroke-width="1.600"/></svg></button>
    <input type="range" min="0" max="100" value="34" aria-label="缩放" class="mx-[11px] h-3 w-[99px] appearance-none bg-[linear-gradient(#bdbdbd,#bdbdbd)] bg-[length:100%_1px] bg-center bg-no-repeat [&::-webkit-slider-thumb]:size-3 [&::-webkit-slider-thumb]:appearance-none [&::-webkit-slider-thumb]:rounded-full [&::-webkit-slider-thumb]:border [&::-webkit-slider-thumb]:border-[#666] [&::-webkit-slider-thumb]:bg-white">
    <button type="button" aria-label="放大"><svg class="size-[11px]" viewBox="0 0 11 11"><path d="M0 5.500h11M5.500 0v11" stroke="#444" stroke-width="1.600"/></svg></button>
  </div>
</footer>

<!-- desktop taskbar -->
<div class="flex h-[38px] shrink-0 items-center border-t border-[#4a3d33] bg-linear-to-r from-[#76604f] via-[#88705e] to-[#4b3c30] whitespace-nowrap text-white">
  <button type="button" aria-label="开始" class="ml-[7px] w-[48px]"><svg class="size-[36px]" viewBox="0 0 36 36">
    <defs><radialGradient id="orb" cx=".5" cy=".85" r=".8"><stop offset="0" stop-color="#38c6f4"/><stop offset=".5" stop-color="#1a6da8"/><stop offset="1" stop-color="#8fb0c4"/></radialGradient></defs>
    <circle cx="18" cy="18" r="17" fill="url(#orb)" stroke="#2d4a5c"/>
    <path d="M10.500 11c2.500-1.600 4.500-1.500 7 0l-1.700 6.500c-2.300-1.500-4.500-1.400-7 0z" fill="#ee6a2c"/><path d="M18.800 11.500c2.500 1.500 4.500 1.500 7.200 0l-1.800 6.500c-2.500 1.500-4.600 1.400-7 0z" fill="#8cc540"/><path d="M8.500 18.800c2.500-1.500 4.600-1.500 7 0l-1.800 6.400c-2.400-1.400-4.500-1.400-7 0z" fill="#3fa2e8"/><path d="M16.800 19.300c2.500 1.500 4.600 1.500 7 0L22 25.800c-2.400 1.500-4.500 1.400-7 0z" fill="#fccb2e"/>
    <path d="M3 15C5 5 13 2 18 2s13 3 15 13C25 11 11 11 3 15z" fill="#fff" opacity=".28"/></svg></button>
  <button type="button" class="flex h-[35px] w-[142px] items-center rounded-l-[3px] border border-[#c5b5a8] bg-linear-to-br from-[#b9a89b] to-[#80695a] pl-[9px]"><svg class="h-[30px] w-6"><use href="#folder"/></svg><span class="ml-[9px]">C:\Users\Admi...</span></button>
  <button type="button" class="flex h-[35px] w-[141px] items-center rounded-r-[3px] border border-l-0 border-[#c5b5a8] bg-linear-to-br from-[#a8978a] to-[#76604f] pl-[9px]"><svg class="h-[30px] w-6"><use href="#folder"/></svg><span class="ml-[9px]">C:\Users\Admi...</span></button>
  <button type="button" class="ml-[3px] flex h-[35px] w-[140px] items-center rounded-[3px] border border-[#c5b5a8] bg-linear-to-br from-[#a08e81] to-[#7c6757] pl-[8px]"><svg class="size-7 shrink-0" viewBox="0 0 28 28"><rect width="27" height="27" rx="3" fill="#2e87f0"/><path d="M5 9h4l3 10 6-10h4M10 9h8" fill="none" stroke="#fff" stroke-width="2.300"/><rect x="16" y="15" width="13" height="13" rx="2" fill="#f0616a"/><path d="M19.500 19.500c1-2 5-2 5 .3s-5 1.700-5 4 3.500 2 5 .5" fill="none" stroke="#fff" stroke-width="1.400"/></svg><span class="ml-[6px]">润泓示范区施工...</span></button>
  <button type="button" class="ml-[3px] flex h-[35px] w-[141px] items-center rounded-[3px] border border-[#c5b5a8] bg-linear-to-br from-[#a08e81] to-[#7c6757] pl-[8px]"><svg class="size-7 shrink-0" viewBox="0 0 28 28"><path d="M0 0h28v28H0z" fill="#e8eef4"/><rect x="2" width="24" height="28" rx="3" fill="#0a67b5"/><path d="M10 10c-4-2-6 0-6 4s2 6 6 4M11 20l3-12 3 12M12 16h4M19 9v11c7 1 7-12 0-11zM14 3v5" fill="none" stroke="#fff" stroke-width="1.500"/></svg><span class="ml-[5px]">CAD快速看图 - ...</span></button>
  <button type="button" class="ml-[3px] flex h-[35px] w-[140px] items-center rounded-[3px] border border-[#ece4de] bg-linear-to-br from-[#d6ccc5] to-[#93806f] pl-[8px]"><span class="flex size-7 shrink-0 items-center justify-center rounded-[4px] bg-[#4398fa] text-[20px] font-medium">预</span><span class="ml-[6px]">广联达预算计价...</span></button>
  <button type="button" class="ml-[3px] flex h-[35px] w-[140px] items-center rounded-[3px] border border-[#c5b5a8] bg-linear-to-br from-[#a79589] to-[#7c6757] pl-[8px]"><span class="flex size-7 shrink-0 items-center justify-center border-[3px] border-[#f39a2e] bg-[#2f3238] text-[16px] font-bold">课</span><span class="ml-[6px]">益教课程录播制...</span></button>
  <span class="ml-[13px] font-['Liberation_Mono'] text-[10px]">CH</span>
  <svg class="ml-[8px] size-[14px]" viewBox="0 0 14 14"><rect width="14" height="14" rx="3" fill="#29b43a"/><path d="M10.500 4C8 2.500 4 3 4 5s6 1.500 6 3.700S6 11.500 3.300 9.800" fill="none" stroke="#fff" stroke-width="2"/></svg>
  <div class="ml-auto flex items-center">
    <div class="flex items-center gap-[7px]">
      <svg class="size-[15px]" viewBox="0 0 15 15"><path d="M7.500 0L14.500 3.500v8L7.500 15 .5 11.500v-8z" fill="#fff"/><path d="M7.500 1.500l5.500 3-5.500 3L2 4.500z" fill="#2b8ef0"/><path d="M2 6.500l5.500 3 5.500-3v1.700l-5.500 3-5.500-3zM2 10l5.500 3 5.500-3v1l-5.500 3L2 11z" fill="#1a6fd0"/></svg>
      <svg class="size-[15px]" viewBox="0 0 15 15"><rect width="15" height="15" rx="2" fill="#f6a623"/><path d="M5.500 11H4.500a2.300 2.300 0 0 1-.5-4.500C5 4 8 3 9.500 6c3.500-.5 4.500 5 .5 5-2.500 0-2-2-.5-3M4.500 9C7 9 7 7 8 6.500" fill="none" stroke="#fff" stroke-width="1.400"/></svg>
      <svg class="size-[15px]" viewBox="0 0 15 15"><rect width="15" height="15" rx="2" fill="#fff"/><path d="M1 10.500C3 9 2 3 7.500 2.500c3 0 4 2 3.500 3.500-1-1.500-3.500-1-3.500 1s3 3.500 6.500 2v2z" fill="#1f74cf"/><path d="M1 11h13v3H1z" fill="#f39a2e"/></svg>
      <span class="flex size-4 items-center justify-center border-2 border-[#f39a2e] bg-[#2f2a26] text-[9px] leading-3">课</span>
      <svg class="size-[15px]" viewBox="0 0 15 15"><path d="M2 0h5v3H2zM1 3h7v9H4z" fill="#8b8b88"/><circle cx="10" cy="10" r="4.800" fill="#2fae3a"/><path d="M7.500 10l2 2 3.300-4" fill="none" stroke="#fff" stroke-width="1.500"/></svg>
      <svg class="size-[15px]" viewBox="0 0 15 15" fill="none" stroke="#fff" stroke-width="1.400"><path d="M6 4h8v7H5V7M8 14h5M10 11v3M1 1h4v4H1zM3 5v7h2"/></svg>
      <svg class="size-[15px]" viewBox="0 0 15 15"><path d="M1 5.500h3L9.500 1v13L4 9.500H1z" fill="#d9583b" stroke="#f4c4b4"/><path d="M11.500 4c1.500 2 1.500 5 0 7" fill="none" stroke="#a04030" stroke-width="1.300"/></svg>
      <svg class="size-[15px]" viewBox="0 0 15 15"><path d="M2 2.500h7v11H2zM4 1h3v1.500H4z" fill="none" stroke="#fff" stroke-width="1.300"/><path d="M8 5h6v3l-1.500 2h-3L8 8zM9.500 2v3M12.500 2v3M11 10v4" fill="#fff" stroke="#fff"/></svg>
      <svg class="size-[15px]" viewBox="0 0 15 15"><path d="M1 5.500h2.500L7 2v11L3.500 9.500H1z" fill="#fff"/><path d="M9 5c1 1.500 1 3.500 0 5M11 3.500c2 2.500 2 5.500 0 8M13 2.500c2 3 2 7 0 10" fill="none" stroke="#fff"/></svg>
    </div>
    <div class="ml-[13px] w-[60px] text-center text-[12px]">21:00<br>2020/8/20</div>
    <button type="button" aria-label="显示桌面" class="ml-[6px] h-9 w-[13px] border border-[#a08f83] bg-linear-to-br from-[#8a796c] to-[#4a3b30]"></button>
  </div>
</div>
</body>
</html>
